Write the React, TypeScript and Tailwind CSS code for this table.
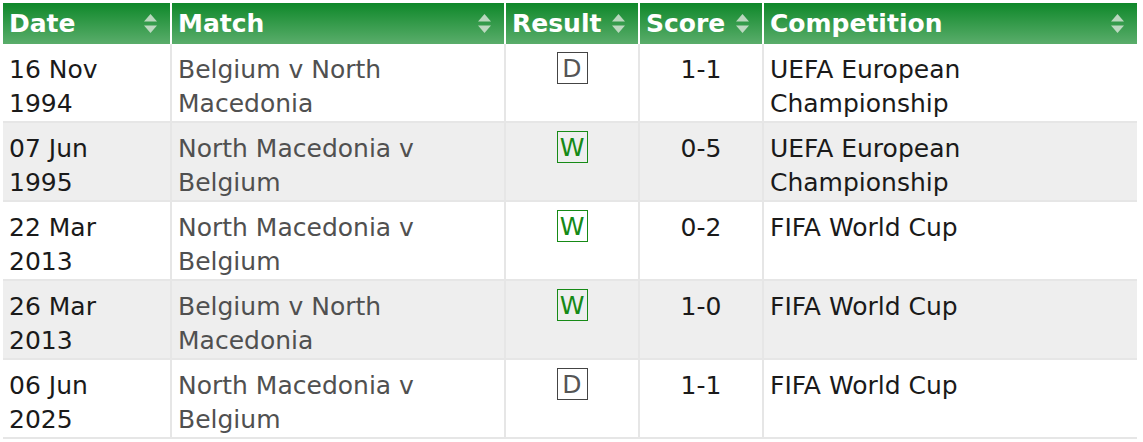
import React from 'react';

type Row = { date: [string, string]; match: [string, string]; result: 'W' | 'D'; score: string; comp: [string, string?] };

const rows: Row[] = [
  { date: ['16 Nov', '1994'], match: ['Belgium v North', 'Macedonia'], result: 'D', score: '1-1', comp: ['UEFA European', 'Championship'] },
  { date: ['07 Jun', '1995'], match: ['North Macedonia v', 'Belgium'], result: 'W', score: '0-5', comp: ['UEFA European', 'Championship'] },
  { date: ['22 Mar', '2013'], match: ['North Macedonia v', 'Belgium'], result: 'W', score: '0-2', comp: ['FIFA World Cup'] },
  { date: ['26 Mar', '2013'], match: ['Belgium v North', 'Macedonia'], result: 'W', score: '1-0', comp: ['FIFA World Cup'] },
  { date: ['06 Jun', '2025'], match: ['North Macedonia v', 'Belgium'], result: 'D', score: '1-1', comp: ['FIFA World Cup'] },
];

function SortIcon() {
  return (
    <svg width="15" height="21" viewBox="0 0 15 21" className="shrink-0">
      <path d="M7.5 1 L14 8.5 L1 8.5 Z" fill="#d2e3d4" fillOpacity="0.85" />
      <path d="M1 12.5 L14 12.5 L7.5 20 Z" fill="#d2e3d4" fillOpacity="0.85" />
    </svg>
  );
}

function Th({ label, last }: { label: string; last?: boolean }) {
  return (
    <th className={`h-[41px] p-0 text-left align-middle ${last ? '' : 'border-r-2 border-white'}`}>
      <div className="flex items-center justify-between pl-[6px] pr-[12px] text-[25px] font-bold leading-none text-white">
        <span>{label}</span>
        <SortIcon />
      </div>
    </th>
  );
}

function Badge({ r }: { r: 'W' | 'D' }) {
  const cls = r === 'W' ? 'border-[#168a16] text-[#168a16]' : 'border-[#444] text-[#555]';
  return (
    <span className={`inline-flex h-[32px] w-[31px] items-center justify-center border text-[25px] leading-none ${cls}`}>
      {r}
    </span>
  );
}

export default function App() {
  return (
    <div className="bg-white pl-[3px] pt-[3px]" style={{ fontFamily: '"DejaVu Sans", Verdana, sans-serif' }}>
      <table className="w-[1134px] table-fixed border-separate border-spacing-0">
        <colgroup>
          <col className="w-[169px]" />
          <col className="w-[334px]" />
          <col className="w-[134px]" />
          <col className="w-[124px]" />
          <col />
        </colgroup>
        <thead>
          <tr className="bg-[linear-gradient(to_bottom,#0f882a,#5aad6b)]">
            <Th label="Date" />
            <Th label="Match" />
            <Th label="Result" />
            <Th label="Score" />
            <Th label="Competition" last />
          </tr>
        </thead>
        <tbody className="text-[25px] leading-[34px]">
          {rows.map((row, i) => (
            <tr key={i} className={i % 2 === 1 ? 'bg-[#eeeeee]' : 'bg-white'}>
              <td className="h-[79px] border-r-2 border-b-2 border-[#e6e6e6] px-[6px] pt-[9px] pb-0 align-top text-[#1a1a1a]">
                {row.date[0]}
                <br />
                {row.date[1]}
              </td>
              <td className="border-r-2 border-b-2 border-[#e6e6e6] px-[6px] pt-[9px] pb-0 align-top text-[#505050]">
                {row.match[0]}
                <br />
                {row.match[1]}
              </td>
              <td className="border-r-2 border-b-2 border-[#e6e6e6] pt-[7px] pb-0 text-center align-top">
                <div className="flex h-[34px] items-center justify-center">
                  <Badge r={row.result} />
                </div>
              </td>
              <td className="border-r-2 border-b-2 border-[#e6e6e6] pt-[9px] pb-0 text-center align-top text-[#1a1a1a]">
                {row.score}
              </td>
              <td className="border-b-2 border-[#e6e6e6] px-[6px] pt-[9px] pb-0 align-top text-[#1a1a1a]">
                {row.comp[0]}
                {row.comp[1] && (
                  <>
                    <br />
                    {row.comp[1]}
                  </>
                )}
              </td>
            </tr>
          ))}
        </tbody>
      </table>
    </div>
  );
}
